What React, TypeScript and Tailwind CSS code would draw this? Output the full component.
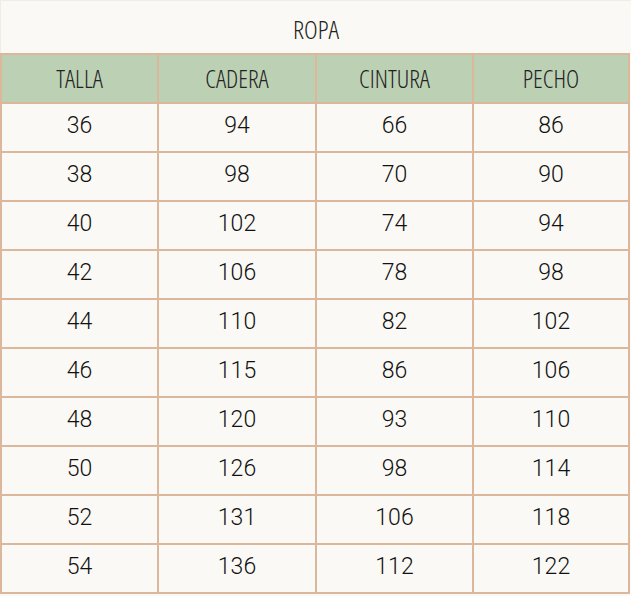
import React from "react";

const rows = [
  [36, 94, 66, 86],
  [38, 98, 70, 90],
  [40, 102, 74, 94],
  [42, 106, 78, 98],
  [44, 110, 82, 102],
  [46, 115, 86, 106],
  [48, 120, 93, 110],
  [50, 126, 98, 114],
  [52, 131, 106, 118],
  [54, 136, 112, 122],
];

const heads = ["TALLA", "CADERA", "CINTURA", "PECHO"];

export default function App() {
  return (
    <div className="w-[631px] h-[596px] bg-[#fbf9f5] overflow-hidden">
      <div className="h-[53px] flex items-center justify-center pt-[4px] text-[#222] text-[26px] font-light [font-family:'Open_Sans',sans-serif] [font-stretch:62.5%] border-t border-l border-[#f1ece4]">
        ROPA
      </div>
      <div className="w-[630px] border-l-2 border-t-2 border-[#dbb89b]">
        <div className="grid grid-cols-[157px_158px_157px_156px] bg-[#bcd1b4]">
          {heads.map((h) => (
            <div
              key={h}
              className="h-[49px] flex items-center justify-center border-r-2 border-b-2 border-[#dbb89b] text-[#222] text-[25px] font-light [font-family:'Open_Sans',sans-serif] [font-stretch:62.5%]"
            >
              {h}
            </div>
          ))}
        </div>
        {rows.map((r, i) => (
          <div key={i} className="grid grid-cols-[157px_158px_157px_156px]">
            {r.map((v, j) => (
              <div
                key={j}
                className="h-[49px] flex items-center justify-center pb-[2px] border-r-2 border-b-2 border-[#dbb89b] text-[#111] text-[23px] font-light [font-family:Roboto,sans-serif]"
              >
                {v}
              </div>
            ))}
          </div>
        ))}
      </div>
    </div>
  );
}
